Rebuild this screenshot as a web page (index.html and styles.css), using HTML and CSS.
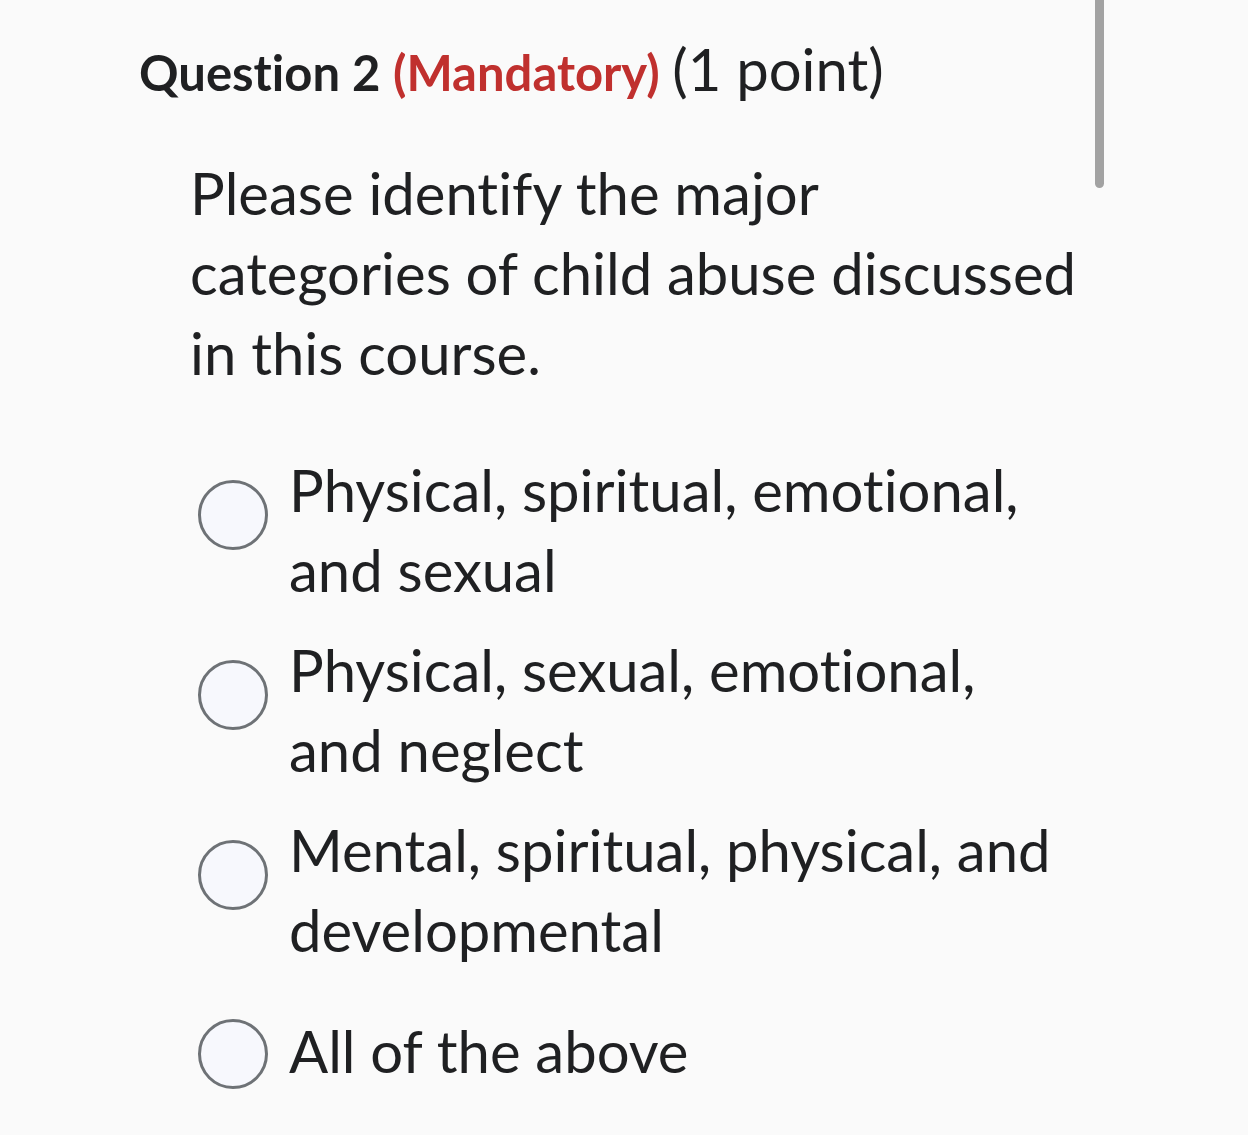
FILE: index.html
```html
<!DOCTYPE html>
<html lang="en">
<head>
<meta charset="utf-8">
<title>Question 2</title>
<link rel="stylesheet" href="styles.css">
</head>
<body>
<div class="scrollbar"></div>
<main class="question">
  <h2 class="q-title"><span class="q-num">Question 2</span> <span class="q-mand">(Mandatory)</span> <span class="q-pts">(1 point)</span></h2>
  <p class="q-text">Please identify the major categories of child abuse discussed in this course.</p>
  <div class="options">
    <label class="option"><span class="radio"></span><span class="opt-text">Physical, spiritual, emotional, and sexual</span></label>
    <label class="option"><span class="radio"></span><span class="opt-text">Physical, sexual, emotional, and neglect</span></label>
    <label class="option"><span class="radio"></span><span class="opt-text">Mental, spiritual, physical, and developmental</span></label>
    <label class="option option-single"><span class="radio"></span><span class="opt-text">All of the above</span></label>
  </div>
</main>
</body>
</html>
```
FILE: styles.css
```css
html, body {
  margin: 0;
  padding: 0;
  background: #fafafa;
}
body {
  font-family: Lato, "Open Sans", sans-serif;
  font-variant-ligatures: none;
  font-feature-settings: "liga" 0, "clig" 0;
  color: #1f2022;
  position: relative;
  min-height: 1135px;
}
.scrollbar {
  position: absolute;
  left: 1095px;
  top: 0;
  width: 9px;
  height: 188px;
  background: #a2a2a2;
  border-radius: 0 0 5px 5px;
}
.question {
  padding: 34px 0 0 139px;
}
.q-title {
  margin: 0;
  font-size: 49px;
  line-height: 70px;
  font-weight: 400;
  white-space: nowrap;
}
.q-num, .q-mand {
  font-weight: 700;
}
.q-mand {
  color: #c0302e;
}
.q-pts {
  font-size: 58px;
}
.q-text {
  margin: 46px 0 0 51px;
  width: 900px;
  font-size: 58px;
  line-height: 80px;
}
.options {
  margin-top: 57px;
  margin-left: 59px;
}
.option {
  display: flex;
  align-items: flex-start;
  margin-top: 20px;
}
.option:first-child {
  margin-top: 0;
}
.radio {
  flex: none;
  box-sizing: border-box;
  width: 70px;
  height: 70px;
  margin-top: 30px;
  border: 3px solid #6e7276;
  border-radius: 50%;
  background: #f7f8fd;
}
.opt-text {
  margin-left: 21px;
  width: 785px;
  font-size: 58px;
  line-height: 80px;
}
.option-single {
  margin-top: 41px;
}
.option-single .radio {
  margin-top: 8px;
}
```
